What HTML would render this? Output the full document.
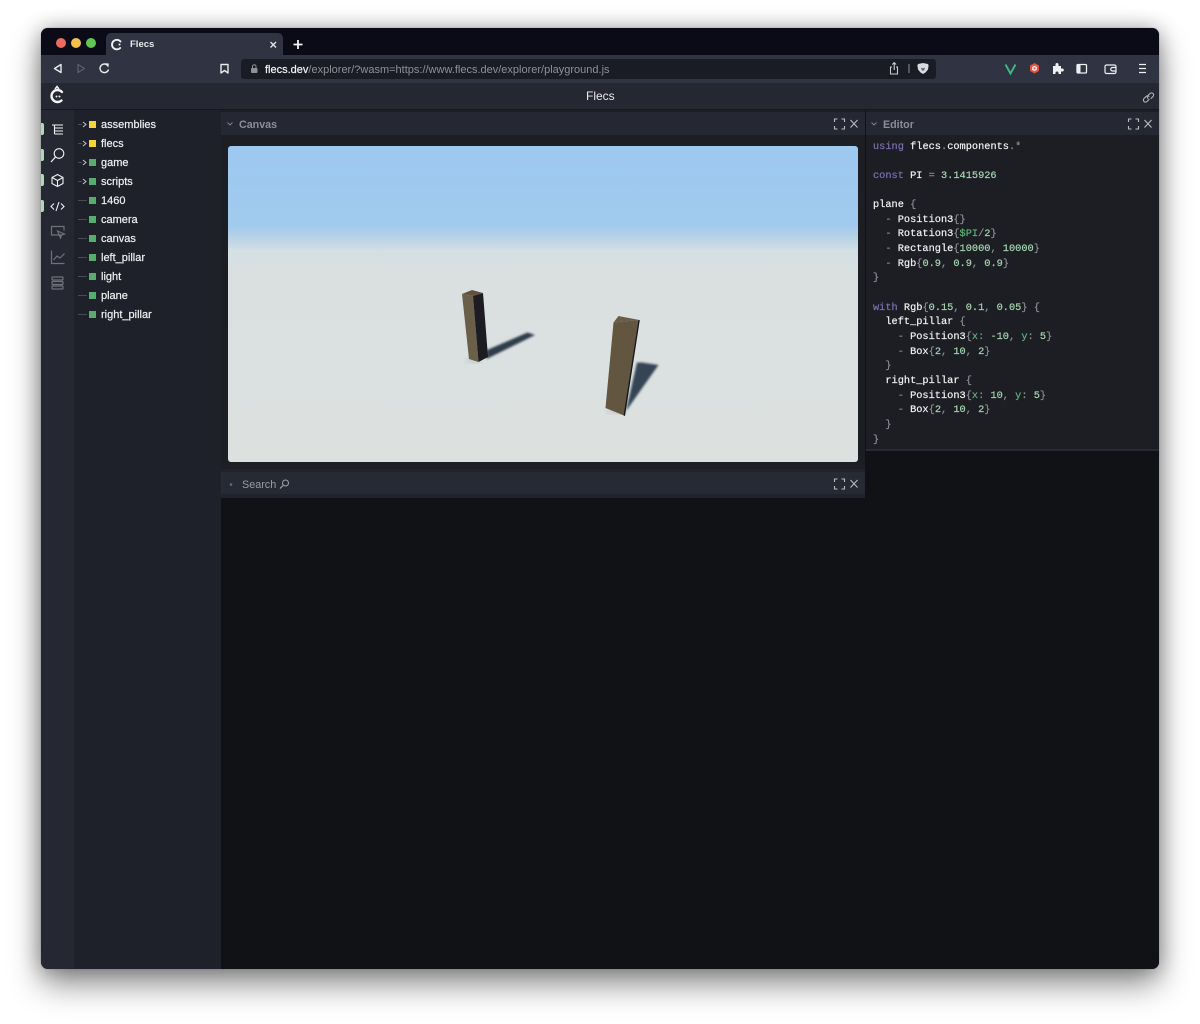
<!DOCTYPE html>
<html><head><meta charset="utf-8"><title>Flecs</title>
<style>
html,body{margin:0;padding:0;width:1200px;height:1024px;overflow:hidden;background:#fff}
body{font-family:"Liberation Sans",sans-serif;position:relative}
.a{position:absolute}
.t{position:absolute;white-space:pre;line-height:14px}
#win{position:absolute;left:41px;top:28px;width:1118px;height:941px;border-radius:7px;overflow:hidden;background:#252832;box-shadow:0 0 1px #777,0 0 20px rgba(0,0,0,.3),0 16px 32px rgba(0,0,0,.42)}
svg{position:absolute;left:0;top:0;overflow:visible}
.tree{font-size:11px;color:#eef0f2;left:101px;-webkit-text-stroke:.2px #eef0f2}
.sq{position:absolute;left:89px;width:7px;height:7px;background:#56ad6d}
.y{background:#f6d33b}
.code{position:absolute;left:873px;top:139.5px;font:10.3px/14.65px "Liberation Mono",monospace;color:#8b8e94;white-space:pre;margin:0;-webkit-text-stroke:.2px}
.w{color:#f1f2f3}.k{color:#7e6fb0}.n{color:#a5d6b0}.g{color:#5fb377}
</style></head><body>
<div id="win"></div>
<div class="a" style="left:41px;top:28px;width:1118px;height:941px;border-radius:7px;overflow:hidden">
 <div class="a" style="left:0;top:0;width:1118px;height:27px;background:#0a0b17"></div>
 <div class="a" style="left:65px;top:5px;width:177px;height:22px;background:#2f3342;border-radius:5px 5px 0 0"></div>
 <div class="a" style="left:0;top:27px;width:1118px;height:28px;background:#2f3342"></div>
 <div class="a" style="left:0;top:55px;width:1118px;height:26px;background:#252832"></div>
 <div class="a" style="left:0;top:81px;width:1118px;height:1px;background:#16181e"></div>
 <div class="a" style="left:0;top:82px;width:33px;height:859px;background:#252832"></div>
 <div class="a" style="left:33px;top:82px;width:147px;height:859px;background:#1e2129"></div>
 <div class="a" style="left:180px;top:82px;width:938px;height:859px;background:#111216"></div>
 <div class="a" style="left:180px;top:82px;width:644px;height:359px;background:#1c1e24"></div>
 <div class="a" style="left:180px;top:84px;width:644px;height:23px;background:#252832"></div>
 <div class="a" style="left:180px;top:441px;width:644px;height:22px;background:#262a34;border-top:3px solid #20232b;border-bottom:4px solid #20232b"></div>
 <div class="a" style="left:825px;top:82px;width:293px;height:339px;background:#1c1e24;border-bottom:2px solid #272a34"></div>
 <div class="a" style="left:825px;top:84px;width:293px;height:23px;background:#252832"></div>
</div>

<div class="a" style="left:56px;top:37.5px;width:10px;height:10px;border-radius:50%;background:#ed6a5e"></div>
<div class="a" style="left:71px;top:37.5px;width:10px;height:10px;border-radius:50%;background:#f4bf4f"></div>
<div class="a" style="left:86px;top:37.5px;width:10px;height:10px;border-radius:50%;background:#61c554"></div>
<div class="t" style="left:130px;top:38px;font-size:9.5px;font-weight:bold;color:#e8e9ec">Flecs</div>

<div class="a" style="left:241px;top:59px;width:695px;height:20px;background:#1a1c25;border-radius:3px"></div>
<div class="t" style="left:265px;top:63px;font-size:11px;color:#8e9198"><span style="color:#f2f3f5;-webkit-text-stroke:.2px #f2f3f5">flecs.dev</span>/explorer/?wasm=https://www.flecs.dev/explorer/playground.js</div>
<div class="t" style="left:586px;top:89px;font-size:12px;color:#e9eaec">Flecs</div>
<div class="t" style="left:239px;top:117.5px;font-size:10.7px;font-weight:bold;color:#8b8e96">Canvas</div>
<div class="t" style="left:883px;top:117.5px;font-size:10.7px;font-weight:bold;color:#8b8e96">Editor</div>
<div class="t" style="left:242px;top:478px;font-size:10.8px;color:#9a9da4">Search</div>

<div class="t tree" style="top:118px">assemblies</div>
<div class="t tree" style="top:137px">flecs</div>
<div class="t tree" style="top:156px">game</div>
<div class="t tree" style="top:175px">scripts</div>
<div class="t tree" style="top:194px">1460</div>
<div class="t tree" style="top:213px">camera</div>
<div class="t tree" style="top:232px">canvas</div>
<div class="t tree" style="top:251px">left_pillar</div>
<div class="t tree" style="top:270px">light</div>
<div class="t tree" style="top:289px">plane</div>
<div class="t tree" style="top:308px">right_pillar</div>
<div class="sq y" style="top:121px"></div><div class="sq y" style="top:140px"></div>
<div class="sq" style="top:159px"></div><div class="sq" style="top:178px"></div><div class="sq" style="top:197px"></div><div class="sq" style="top:216px"></div><div class="sq" style="top:235px"></div><div class="sq" style="top:254px"></div><div class="sq" style="top:273px"></div><div class="sq" style="top:292px"></div><div class="sq" style="top:311px"></div>

<div class="a" style="left:41px;top:123px;width:3px;height:12px;background:#a9dcb4;border-radius:0 2px 2px 0"></div>
<div class="a" style="left:41px;top:149px;width:3px;height:12px;background:#a9dcb4;border-radius:0 2px 2px 0"></div>
<div class="a" style="left:41px;top:174px;width:3px;height:12px;background:#a9dcb4;border-radius:0 2px 2px 0"></div>
<div class="a" style="left:41px;top:200px;width:3px;height:12px;background:#a9dcb4;border-radius:0 2px 2px 0"></div>

<svg width="1200" height="1024" viewBox="0 0 1200 1024" fill="none">
 <defs>
  <linearGradient id="sky" x1="0" y1="0" x2="0" y2="1"><stop offset="0" stop-color="#9dc8f0"/><stop offset=".25" stop-color="#a0caee"/><stop offset=".285" stop-color="#b5d0e6"/><stop offset=".33" stop-color="#d3dfe3"/><stop offset=".4" stop-color="#dae0e0"/><stop offset="1" stop-color="#dce1e0"/></linearGradient>
  <filter id="b1"><feGaussianBlur stdDeviation="1"/></filter>
  <filter id="b2"><feGaussianBlur stdDeviation="3"/></filter>
  <filter id="b0"><feGaussianBlur stdDeviation="0.35"/></filter>
 </defs>
 <rect x="228" y="146" width="630" height="316" rx="3" fill="url(#sky)"/>
 <!-- soft contact -->
 <ellipse cx="474" cy="360" rx="8" ry="3" fill="#c2c8c8" filter="url(#b2)"/>
 <ellipse cx="616" cy="411" rx="10" ry="3" fill="#c2c8c8" filter="url(#b2)"/>
 <!-- shadows -->
 <polygon points="487,350 527.500,332.500 535,335 486.500,359" fill="#2f3c4c" filter="url(#b1)"/>
 <polygon points="637,362.500 642,362.500 658.500,365 626,411" fill="#354456" filter="url(#b1)"/>
 <g filter="url(#b0)">
 <!-- left pillar -->
 <polygon points="462,294 472,290 483,293 473,296" fill="#5f5340"/>
 <polygon points="462,294 473,296 478.500,362 469,359" fill="#6b5e48"/>
 <polygon points="473,296 483,293 488,357 478.500,362" fill="#1b1f21"/>
 <!-- right pillar -->
 <polygon points="613.500,322.500 618.500,316 639.500,320" fill="#6a5d47"/>
 <polygon points="613.500,322.500 639.500,320 624,415.500 605.500,408" fill="#625640"/>
 <polygon points="638.500,320 639.800,320 625,416 623.600,415.500" fill="#15171a"/>
 </g>

 <!-- tab favicon & chrome -->
 <path d="M120.500 41.500a4.800 4.800 0 1 0-.3 6.500" stroke="#eef0f2" stroke-width="1.900" stroke-linecap="round"/>
 <circle cx="119.500" cy="44.500" r="1" fill="#eef0f2"/>
 <path d="M270.500 42l5.500 5.500M276 42l-5.500 5.500" stroke="#e3e4e7" stroke-width="1.400"/>
 <path d="M298 40v9M293.500 44.500h9" stroke="#f4f5f6" stroke-width="1.800"/>
 <!-- nav -->
 <path d="M61 64.500v8l-6.500-4z" stroke="#e9eaec" stroke-width="1.400" stroke-linejoin="round"/>
 <path d="M78 64.500v8l6.500-4z" stroke="#5b5f6b" stroke-width="1.300" stroke-linejoin="round"/>
 <path d="M108 66a4.300 4.300 0 1 0 .5 3.500" stroke="#e9eaec" stroke-width="1.400"/>
 <path d="M105.500 63.500l3 .3-.3 3z" fill="#e9eaec" stroke="#e9eaec" stroke-width=".6"/>
 <path d="M221 64.500h7v8.500l-3.500-2.500-3.500 2.500z" stroke="#e9eaec" stroke-width="1.400" stroke-linejoin="round"/>
 <rect x="251" y="68" width="6.500" height="5" rx="1" fill="#8e9198"/>
 <path d="M252.500 68v-1.500a1.700 1.700 0 0 1 3.500 0V68" stroke="#8e9198"/>
 <path d="M892 67h-1.500v7h7v-7H896M894.200 70v-7M892.300 64.500l1.900-1.900 1.900 1.900" stroke="#c9cbd0" stroke-width="1.100"/>
 <path d="M909 64v9" stroke="#8e9198"/>
 <path d="M918 64l5-1 5 1 .6 1.500-.6 4-2.500 3-2.500 1.500-2.500-1.500-2.500-3-.6-4z" fill="#d9dbe0"/>
 <path d="M921 67.500l2 1 2-1-1 3h-2z" fill="#555a68"/>
 <!-- extensions -->
 <path d="M1005.500 64.500l5 9 5-9" stroke="#41b883" stroke-width="1.900"/>
 <polygon points="1034.500,63 1039,65.500 1039,71 1034.500,73.500 1030,71 1030,65.500" fill="#e8503f"/>
 <polygon points="1034.500,65.500 1037,67 1037,69.800 1034.500,71.200 1032,69.800 1032,67" fill="#f3e9e7"/>
 <circle cx="1034.500" cy="68.300" r="1" fill="#e8503f"/>
 <path d="M1053 66h2.500v-1.500a1.500 1.500 0 0 1 3 0V66h2.500v2.500h1.300a1.500 1.500 0 0 1 0 3H1061V74h-2.500v-1a1.500 1.500 0 0 0-3 0v1H1053z" fill="#eef0f2"/>
 <rect x="1077" y="64.500" width="9.500" height="8.500" rx="1" stroke="#eef0f2" stroke-width="1.300"/>
 <rect x="1077" y="64.500" width="3.500" height="8.500" fill="#eef0f2"/>
 <rect x="1105" y="65" width="11" height="8.500" rx="1.500" stroke="#eef0f2" stroke-width="1.200"/>
 <path d="M1116 67.500h-3.500a1.700 1.700 0 0 0 0 3.500h3.500" stroke="#eef0f2" stroke-width="1.200"/>
 <path d="M1139 64.500h7M1139 68.500h7M1139 72.500h7" stroke="#eef0f2" stroke-width="1.300"/>
 <!-- app logo -->
 <path d="M62 92a6 6 0 1 0-.5 8.500" stroke="#f1f2f3" stroke-width="2.400" stroke-linecap="round"/>
 <path d="M55 89l2-2.500 2 2.500" stroke="#f1f2f3" stroke-width="1.500"/>
 <circle cx="56.500" cy="96.500" r="1" fill="#f1f2f3"/><circle cx="59.500" cy="96.500" r="1" fill="#f1f2f3"/>
 <g stroke="#b4b6bb" stroke-width="1.100" stroke-linecap="round" transform="translate(2 1)">
  <path d="M1147 98.500l-2 2a2 2 0 0 1-3-3l2-2a2 2 0 0 1 3 0"/>
  <path d="M1149 97.500l2-2a2 2 0 0 0-3-3l-2 2a2 2 0 0 0 0 3"/>
 </g>
 <!-- panel header icons -->
 <path d="M227.500 122.500l2.500 2.500 2.500-2.500M871.500 122.500l2.500 2.500 2.500-2.500" stroke="#7b7e86" stroke-width="1.100"/>
 <circle cx="231" cy="484.500" r="1.300" fill="#6b6e76"/>
 <g stroke="#b9bbc0" stroke-width="1.100">
  <path d="M834.500 122v-3h3M841.500 119h3v3M844.500 126v3h-3M837.500 129h-3v-3"/>
  <path d="M850.500 120l7 7.500M857.500 120l-7 7.500"/>
  <path d="M1128.500 122v-3h3M1135.500 119h3v3M1138.500 126v3h-3M1131.500 129h-3v-3"/>
  <path d="M1144.500 120l7 7.500M1151.500 120l-7 7.500"/>
  <path d="M834.500 482v-3h3M841.500 479h3v3M844.500 486v3h-3M837.500 489h-3v-3"/>
  <path d="M850.500 480l7 7.500M857.500 480l-7 7.500"/>
 </g>
 <circle cx="285.500" cy="483" r="3" stroke="#a0a3a9"/>
 <path d="M283 485.500l-3 3" stroke="#a0a3a9" stroke-width="1.200"/>
 <!-- sidebar icons -->
 <g stroke="#eef0f2" stroke-width="1.100">
  <path d="M52 125h11M54.500 128h8.500M54.500 131h8.500M54.500 134h8.500M54.500 125v9"/>
  <circle cx="59" cy="153.500" r="4.800"/>
  <path d="M55.500 157l-4.500 5" stroke-width="1.300"/>
  <path d="M57.500 174.500l5.500 3v6l-5.500 3-5.500-3v-6zM52 177.500l5.500 3 5.500-3M57.500 180.500v6"/>
  <path d="M54 203.500l-3 3 3 3M61 203.500l3 3-3 3M59 202l-3 9"/>
 </g>
 <g stroke="#6f727a" stroke-width="1.200">
  <path d="M62 235h-10.500v-8.500H64v4"/>
  <path d="M57.500 231l7 3-3 1-1 3z"/>
  <path d="M51.500 250.500v13h13M53.500 260l3.500-4 3 2 4.500-4.500"/>
  <rect x="52" y="277" width="11" height="3" rx=".8"/><rect x="52" y="281.500" width="11" height="3" rx=".8"/><rect x="52" y="286" width="11" height="3" rx=".8"/>
 </g>
 <!-- tree guides -->
 <g stroke="#484b53" stroke-width="1">
  <path d="M78 124.500h4M78 143.500h4M78 162.500h4M78 181.500h4M78 200.500h9M78 219.500h9M78 238.500h9M78 257.500h9M78 276.500h9M78 295.500h9M78 314.500h9"/>
 </g>
 <path d="M83 122l3 2.500-3 2.500M83 141l3 2.500-3 2.500M83 160l3 2.500-3 2.500M83 179l3 2.500-3 2.500" stroke="#c3c5c9" stroke-width="1"/>
</svg>

<pre class="code"><span class="k">using</span> <span class="w">flecs</span>.<span class="w">components</span>.*

<span class="k">const</span> <span class="w">PI</span> = <span class="n">3.1415926</span>

<span class="w">plane</span> {
  - <span class="w">Position3</span>{}
  - <span class="w">Rotation3</span>{<span class="g">$PI</span>/<span class="n">2</span>}
  - <span class="w">Rectangle</span>{<span class="n">10000</span>, <span class="n">10000</span>}
  - <span class="w">Rgb</span>{<span class="n">0.9</span>, <span class="n">0.9</span>, <span class="n">0.9</span>}
}

<span class="k">with</span> <span class="w">Rgb</span>{<span class="n">0.15</span>, <span class="n">0.1</span>, <span class="n">0.05</span>} {
  <span class="w">left_pillar</span> {
    - <span class="w">Position3</span>{<span class="g">x</span>: <span class="n">-10</span>, <span class="g">y</span>: <span class="n">5</span>}
    - <span class="w">Box</span>{<span class="n">2</span>, <span class="n">10</span>, <span class="n">2</span>}
  }
  <span class="w">right_pillar</span> {
    - <span class="w">Position3</span>{<span class="g">x</span>: <span class="n">10</span>, <span class="g">y</span>: <span class="n">5</span>}
    - <span class="w">Box</span>{<span class="n">2</span>, <span class="n">10</span>, <span class="n">2</span>}
  }
}</pre>
</body></html>
